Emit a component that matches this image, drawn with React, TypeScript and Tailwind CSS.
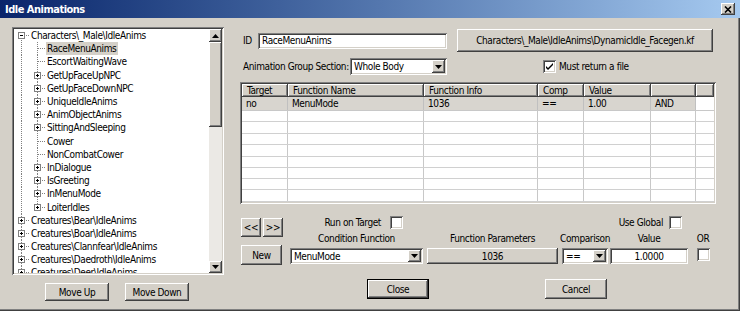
import React from "react";

const raised =
  "bg-[#d4d0c8] shadow-[inset_-1px_-1px_0_#404040,inset_1px_1px_0_#ffffff,inset_-2px_-2px_0_#808080,inset_2px_2px_0_#d4d0c8]";
const sunken =
  "bg-white shadow-[inset_1px_1px_0_#808080,inset_-1px_-1px_0_#ffffff,inset_2px_2px_0_#404040,inset_-2px_-2px_0_#d4d0c8]";

type TreeRow = { text: string; level: 0 | 1; box?: "+" | "-"; selected?: boolean };

const treeRows: TreeRow[] = [
  { text: "Characters\\_Male\\IdleAnims", level: 0, box: "-" },
  { text: "RaceMenuAnims", level: 1, selected: true },
  { text: "EscortWaitingWave", level: 1 },
  { text: "GetUpFaceUpNPC", level: 1, box: "+" },
  { text: "GetUpFaceDownNPC", level: 1, box: "+" },
  { text: "UniqueIdleAnims", level: 1, box: "+" },
  { text: "AnimObjectAnims", level: 1, box: "+" },
  { text: "SittingAndSleeping", level: 1, box: "+" },
  { text: "Cower", level: 1 },
  { text: "NonCombatCower", level: 1 },
  { text: "InDialogue", level: 1, box: "+" },
  { text: "IsGreeting", level: 1, box: "+" },
  { text: "InMenuMode", level: 1, box: "+" },
  { text: "LoiterIdles", level: 1, box: "+" },
  { text: "Creatures\\Bear\\IdleAnims", level: 0, box: "+" },
  { text: "Creatures\\Boar\\IdleAnims", level: 0, box: "+" },
  { text: "Creatures\\Clannfear\\IdleAnims", level: 0, box: "+" },
  { text: "Creatures\\Daedroth\\IdleAnims", level: 0, box: "+" },
  { text: "Creatures\\Deer\\IdleAnims", level: 0, box: "+" },
];

function ExpandBox({ x, kind }: { x: number; kind: "+" | "-" }) {
  return (
    <g>
      <rect x={x + 0.5} y={3.5} width={6} height={6} fill="#fff" stroke="#808080" />
      <line x1={x + 2} y1={6.5} x2={x + 5} y2={6.5} stroke="#000" />
      {kind === "+" && <line x1={x + 3.5} y1={5} x2={x + 3.5} y2={8} stroke="#000" />}
    </g>
  );
}

function Gutter({ row, first, last }: { row: TreeRow; first: boolean; last: boolean }) {
  const dot = { stroke: "#808080", strokeDasharray: "1 1" };
  if (row.level === 0) {
    return (
      <svg width="16" height="13" className="shrink-0">
        <line x1={7.5} y1={first ? 7 : 0} x2={7.5} y2={13} {...dot} />
        <line x1={8} y1={6.5} x2={16} y2={6.5} {...dot} />
        {row.box && <ExpandBox x={4} kind={row.box} />}
      </svg>
    );
  }
  return (
    <svg width="32" height="13" className="shrink-0">
      <line x1={7.5} y1={0} x2={7.5} y2={13} {...dot} />
      <line x1={23.5} y1={0} x2={23.5} y2={last ? 7 : 13} {...dot} />
      <line x1={24} y1={6.5} x2={32} y2={6.5} {...dot} />
      {row.box && <ExpandBox x={20} kind={row.box} />}
    </svg>
  );
}

function Arrow({ down }: { down?: boolean }) {
  return (
    <svg width="7" height="4" viewBox="0 0 7 4">
      <path d={down ? "M0 0h7L3.5 4z" : "M0 4h7L3.5 0z"} fill="#000" />
    </svg>
  );
}

function Check({ checked }: { checked?: boolean }) {
  return (
    <div className={`w-[13px] h-[13px] shrink-0 flex items-center justify-center ${sunken}`}>
      {checked && (
        <svg width="9" height="9" viewBox="0 0 9 9">
          <path d="M1 4l2 2 5-5v2L3 8 1 6z" fill="#000" />
        </svg>
      )}
    </div>
  );
}

function Select({ value, className }: { value: string; className: string }) {
  return (
    <div className={`flex items-center p-[2px] ${sunken} ${className}`}>
      <span className="flex-1 pl-[2px] truncate">{value}</span>
      <div className={`w-[13px] self-stretch flex items-center justify-center ${raised}`}>
        <Arrow down />
      </div>
    </div>
  );
}

const columns = [
  { name: "Target", w: "w-[46px]", val: "no" },
  { name: "Function Name", w: "w-[136px]", val: "MenuMode" },
  { name: "Function Info", w: "w-[114px]", val: "1036" },
  { name: "Comp", w: "w-[46px]", val: "==" },
  { name: "Value", w: "w-[67px]", val: "1.00" },
  { name: "", w: "w-[45px]", val: "AND" },
];

const emptyRows = ["h-[11px]", "h-[12px]", "h-[11px]", "h-[12px]", "h-[11px]", "h-[11px]", "h-[11px]", "h-[12px]"];

export default function App() {
  return (
    <div className="w-[740px] h-[311px] flex flex-col overflow-hidden bg-[#d4d0c8] text-black text-[10px] leading-[13px] tracking-[-0.4px] font-['DejaVu_Sans_Condensed','Liberation_Sans',sans-serif] shadow-[inset_-1px_-1px_0_#404040,inset_-2px_-2px_0_#808080]">
      {/* Title bar */}
      <div className="h-[18px] shrink-0 flex items-center justify-between pl-[5px] pr-[5px] bg-gradient-to-r from-[#0a246a] to-[#a6caf0]">
        <span className="text-white font-bold text-[11px] tracking-[-0.5px]">Idle Animations</span>
        <div className={`w-[14px] h-[12px] flex items-center justify-center ${raised}`}>
          <svg width="8" height="7" viewBox="0 0 8 7">
            <path d="M1 0.5l6 6M7 0.5l-6 6" stroke="#000" strokeWidth="1.6" />
          </svg>
        </div>
      </div>

      <div className="flex">
        {/* Left: tree */}
        <div className="w-[230px] shrink-0 pl-[12px] pt-[9px]">
          <div className={`w-[212px] h-[248px] flex p-[2px] ${sunken}`}>
            <div className="flex-1 overflow-hidden">
              {treeRows.map((r, i) => (
                <div key={i} className="h-[13.2px] flex items-center whitespace-nowrap">
                  <Gutter row={r} first={i === 0} last={r.text === "LoiterIdles"} />
                  <span className={`pl-[1px] pr-[2px] ${r.selected ? "bg-[#d4d0c8]" : ""}`}>{r.text}</span>
                </div>
              ))}
            </div>
            <div className="w-[13px] flex flex-col">
              <div className={`h-[13px] flex items-center justify-center ${raised}`}>
                <Arrow />
              </div>
              <div className={`h-[85px] ${raised}`} />
              <div className="flex-1 bg-[#ebe9e5]" />
              <div className={`h-[12px] flex items-center justify-center ${raised}`}>
                <Arrow down />
              </div>
            </div>
          </div>
          <div className="flex gap-[16px] pl-[33px] mt-[8px]">
            <div className={`w-[64px] h-[18px] flex items-center justify-center ${raised}`}>Move Up</div>
            <div className={`w-[64px] h-[18px] flex items-center justify-center ${raised}`}>Move Down</div>
          </div>
        </div>

        {/* Right: details */}
        <div className="w-[476px] ml-[10px] pt-[11px] flex flex-col">
          <div className="flex items-center h-[23px]">
            <span className="w-[18px] pl-[3px]">ID</span>
            <div className={`w-[189px] h-[16px] flex items-center pl-[4px] ${sunken}`}>RaceMenuAnims</div>
            <div className={`ml-[10px] w-[256px] h-[23px] flex items-center justify-center whitespace-nowrap ${raised}`}>
              Characters\_Male\IdleAnims\DynamicIdle_Facegen.kf
            </div>
          </div>

          <div className="flex items-center h-[17px] mt-[6px]">
            <span className="w-[110px] pl-[3px] whitespace-nowrap">Animation Group Section:</span>
            <Select value="Whole Body" className="w-[97px] h-[17px]" />
            <div className="ml-[96px] flex items-center">
              <Check checked />
              <span className="ml-[3px]">Must return a file</span>
            </div>
          </div>

          {/* Conditions grid */}
          <div className={`mt-[7px] h-[122px] p-[2px] flex flex-col ${sunken}`}>
            <div className="flex h-[13px]">
              {columns.map((c, i) => (
                <div key={i} className={`${c.w} shrink-0 pl-[5px] flex items-center ${raised}`}>
                  {c.name}
                </div>
              ))}
              <div className={`flex-1 ${raised}`} />
            </div>
            <div className="flex h-[14px] border-b border-[#c8c8c8] bg-white">
              {columns.map((c, i) => (
                <div key={i} className={`${c.w} shrink-0 pl-[4px] flex items-center bg-[#d8d5cf] border-r border-[#c0c0c0]`}>
                  {c.val}
                </div>
              ))}
              <div className="flex-1" />
            </div>
            {emptyRows.map((h, j) => (
              <div key={j} className={`flex ${h} border-b border-[#d0d0d0] bg-white`}>
                {columns.map((c, i) => (
                  <div key={i} className={`${c.w} shrink-0 border-r border-[#c8c8c8]`} />
                ))}
                <div className="flex-1" />
              </div>
            ))}
          </div>

          {/* Condition editor */}
          <div className="flex">
            <div className="w-[42px] ml-[1px] pt-[14px]">
              <div className="flex gap-[2px]">
                <div className={`w-[20px] h-[19px] flex items-center justify-center ${raised}`}>&lt;&lt;</div>
                <div className={`w-[20px] h-[19px] flex items-center justify-center ${raised}`}>&gt;&gt;</div>
              </div>
              <div className={`mt-[8px] w-[41px] h-[20px] flex items-center justify-center ${raised}`}>New</div>
            </div>
            <div className="ml-[7px] pt-[12px] flex flex-col">
              <div className="flex items-center h-[13px]">
                <span className="w-[91px] text-right">Run on Target</span>
                <div className="ml-[9px]">
                  <Check />
                </div>
                <span className="w-[260px] text-right">Use Global</span>
                <div className="ml-[6px]">
                  <Check />
                </div>
              </div>
              <div className="flex mt-[3px]">
                <div className="w-[133px] flex flex-col items-center">
                  <span className="h-[13px] whitespace-nowrap">Condition Function</span>
                  <Select value="MenuMode" className="mt-[3px] w-[133px] h-[16px]" />
                </div>
                <div className="ml-[4px] w-[131px] flex flex-col items-center">
                  <span className="h-[13px] whitespace-nowrap">Function Parameters</span>
                  <div className={`mt-[3px] w-[131px] h-[16px] flex items-center justify-center ${raised}`}>1036</div>
                </div>
                <div className="ml-[4px] w-[46px] flex flex-col items-center">
                  <span className="h-[13px] whitespace-nowrap">Comparison</span>
                  <Select value="==" className="mt-[3px] w-[46px] h-[16px]" />
                </div>
                <div className="ml-[2px] w-[78px] flex flex-col items-center">
                  <span className="h-[13px]">Value</span>
                  <div className={`mt-[3px] w-[78px] h-[16px] flex items-center justify-center ${sunken}`}>1.0000</div>
                </div>
                <div className="ml-[9px] w-[12px] flex flex-col items-center">
                  <span className="h-[13px]">OR</span>
                  <div className="mt-[3px]">
                    <Check />
                  </div>
                </div>
              </div>
            </div>
          </div>

          <div className="flex mt-[14px]">
            <div className={`ml-[127px] w-[62px] h-[20px] flex items-center justify-center border border-black ${raised}`}>Close</div>
            <div className={`ml-[116px] w-[62px] h-[20px] flex items-center justify-center ${raised}`}>Cancel</div>
          </div>
        </div>
      </div>
    </div>
  );
}
